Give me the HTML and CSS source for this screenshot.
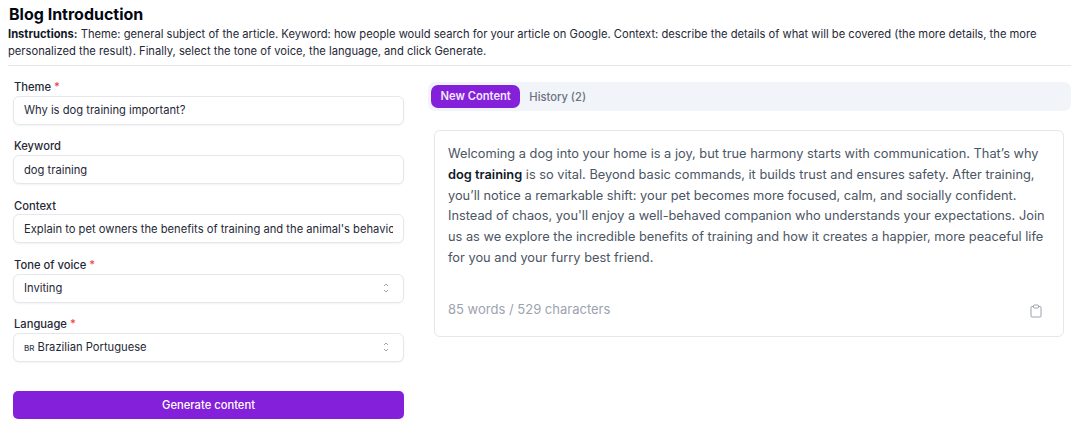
FILE: index.html
```html
<!DOCTYPE html>
<html lang="en">
<head>
    <meta charset="UTF-8">
    <meta name="viewport" content="width=device-width, initial-scale=1.0">
    <title>Blog Introduction</title>
    <link rel="stylesheet" href="styles.css">
</head>
<body>
    <header class="page-head">
        <h1>Blog Introduction</h1>
        <p><strong>Instructions:</strong> Theme: general subject of the article. Keyword: how people would search for your article on Google. Context: describe the details of what will be covered (the more details, the more personalized the result). Finally, select the tone of voice, the language, and click Generate.</p>
    </header>
    <main class="layout">
        <form class="form">
            <div class="field">
                <label>Theme <span class="req">*</span></label>
                <input class="control" type="text" value="Why is dog training important?">
            </div>
            <div class="field">
                <label>Keyword</label>
                <input class="control" type="text" value="dog training">
            </div>
            <div class="field">
                <label>Context</label>
                <input class="control" type="text" value="Explain to pet owners the benefits of training and the animal's behavior changes">
            </div>
            <div class="field">
                <label>Tone of voice <span class="req">*</span></label>
                <div class="control select">
                    <span>Inviting</span>
                    <svg class="updown" viewBox="0 0 8 12" width="8" height="12"><path d="M2 4 4 2l2 2M2 8l2 2 2-2"/></svg>
                </div>
            </div>
            <div class="field">
                <label>Language <span class="req">*</span></label>
                <div class="control select">
                    <span><span class="flag">BR</span> Brazilian Portuguese</span>
                    <svg class="updown" viewBox="0 0 8 12" width="8" height="12"><path d="M2 4 4 2l2 2M2 8l2 2 2-2"/></svg>
                </div>
            </div>
            <button class="generate" type="button">Generate content</button>
        </form>
        <section class="output">
            <div class="tabs">
                <span class="tab active">New Content</span>
                <span class="tab">History (2)</span>
            </div>
            <article class="result">
                <p>Welcoming a dog into your home is a joy, but true harmony starts with communication. That’s why <strong>dog training</strong> is so vital. Beyond basic commands, it builds trust and ensures safety. After training, you’ll notice a remarkable shift: your pet becomes more focused, calm, and socially confident. Instead of chaos, you'll enjoy a well-behaved companion who understands your expectations. Join us as we explore the incredible benefits of training and how it creates a happier, more peaceful life for you and your furry best friend.</p>
                <div class="result-foot">
                    <span>85 words / 529 characters</span>
                    <svg class="copy" viewBox="0 0 12 14" width="12" height="14"><path d="M3.500 2.500H2a1 1 0 0 0-1 1v8.500a1 1 0 0 0 1 1h8a1 1 0 0 0 1-1V3.500a1 1 0 0 0-1-1H8.500"/><rect x="3.500" y="1" width="5" height="3" rx=".7"/></svg>
                </div>
            </article>
        </section>
    </main>
</body>
</html>
```

FILE: styles.css
```css
* {
    box-sizing: border-box;
}

body {
    font-family: Inter, "Liberation Sans", sans-serif;
    background-color: #fff;
    color: #111827;
    margin: 0;
    padding: 4px 7px 0 8px;
}

.page-head {
    border-bottom: 1px solid #e5e7eb;
    padding-bottom: 5px;
}

h1 {
    font-size: 16px;
    font-weight: 700;
    line-height: 20px;
    margin: 0 0 2px 1px;
    color: #030712;
}

.page-head p {
    font-size: 11.2px;
    line-height: 17px;
    margin: 0;
    color: #1f2937;
}

.page-head strong {
    font-weight: 700;
    color: #111827;
}

.layout {
    display: grid;
    grid-template-columns: 391px 641px;
    column-gap: 25px;
    padding: 13px 0 0 5px;
    align-items: start;
}

.form {
    display: flex;
    flex-direction: column;
    gap: 13.5px;
}

.field label {
    display: block;
    font-size: 11.2px;
    line-height: 16.8px;
    font-weight: 500;
    margin-left: 1px;
    color: #1f2937;
}

.req {
    color: #ef4444;
}

.control {
    display: flex;
    align-items: center;
    width: 100%;
    height: 29px;
    padding: 0 10px;
    font-family: inherit;
    font-size: 11.2px;
    color: #1f2937;
    background: #fff;
    border: 1px solid #e5e7eb;
    border-radius: 6px;
    box-shadow: 0 1px 2px rgba(0, 0, 0, 0.05);
}

.select {
    justify-content: space-between;
}

.flag {
    font-size: 8px;
    font-weight: 500;
    color: #374151;
}

.updown {
    fill: none;
    stroke: #9ca3af;
    stroke-width: 1;
    margin-right: 3px;
}

.generate {
    height: 28px;
    margin-top: 15.5px;
    font-family: inherit;
    font-size: 11.2px;
    font-weight: 500;
    color: #fff;
    background-color: #8420d9;
    border: none;
    border-radius: 5px;
}

.tabs {
    display: flex;
    align-items: center;
    gap: 9px;
    height: 29px;
    margin: 3px -1px 0 -1px;
    padding: 0 3px;
    background-color: #f1f5f9;
    border-radius: 7px;
}

.tab {
    font-size: 11.2px;
    font-weight: 500;
    color: #6b7280;
}

.tab.active {
    font-weight: 600;
    color: #f3e8ff;
    background-color: #8420d9;
    border-radius: 7px;
    padding: 4px 9.5px;
    line-height: 15px;
}

.result {
    margin: 19px 6px 0 5px;
    height: 207px;
    padding: 13px 14px 13px 13px;
    border: 1px solid #e5e7eb;
    border-radius: 6px;
}

.result p {
    font-size: 12.8px;
    line-height: 20.8px;
    margin: 0;
    color: #4b5563;
}

.result strong {
    font-weight: 600;
    color: #111827;
}

.result-foot {
    display: flex;
    justify-content: space-between;
    align-items: flex-start;
    margin-top: 32px;
    font-size: 13px;
    color: #9ca3af;
}

.copy {
    fill: none;
    stroke: #9ca3af;
    stroke-width: 1;
    margin: 3px 7px 0 0;
}
```
